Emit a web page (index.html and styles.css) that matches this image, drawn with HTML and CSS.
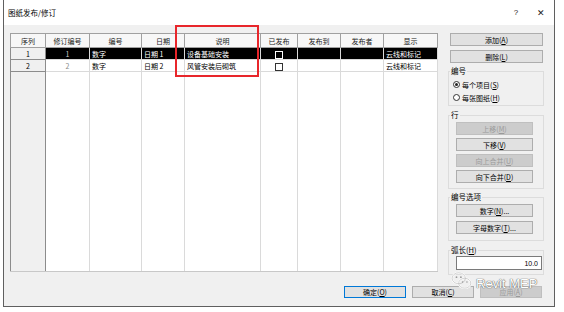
FILE: index.html
```html
<!DOCTYPE html>
<html lang="zh-CN">
<head>
    <meta charset="UTF-8">
    <title>图纸发布/修订</title>
    <link rel="stylesheet" href="styles.css">
</head>
<body>
    <div class="dialog">
        <div class="titlebar">
            <span class="title">图纸发布/修订</span>
            <span class="help">?</span>
            <span class="close">✕</span>
        </div>

        <div class="content">
            <div class="main">
                <!-- revision grid -->
                <table class="grid">
                    <colgroup>
                        <col style="width:35px">
                        <col style="width:44px">
                        <col style="width:52px">
                        <col style="width:43px">
                        <col style="width:76px">
                        <col style="width:37px">
                        <col style="width:43px">
                        <col style="width:43px">
                        <col style="width:54px">
                    </colgroup>
                    <tr class="head">
                        <th>序列</th>
                        <th>修订编号</th>
                        <th>编号</th>
                        <th>日期</th>
                        <th>说明</th>
                        <th>已发布</th>
                        <th>发布到</th>
                        <th>发布者</th>
                        <th>显示</th>
                    </tr>
                    <tr class="row selected">
                        <td class="rowhead">1</td>
                        <td class="num">1</td>
                        <td>数字</td>
                        <td>日期 1</td>
                        <td>设备基础安装</td>
                        <td class="check"><span class="box"></span></td>
                        <td></td>
                        <td></td>
                        <td>云线和标记</td>
                    </tr>
                    <tr class="row">
                        <td class="rowhead">2</td>
                        <td class="num">2</td>
                        <td>数字</td>
                        <td>日期 2</td>
                        <td>风管安装后砌筑</td>
                        <td class="check"><span class="box"></span></td>
                        <td></td>
                        <td></td>
                        <td>云线和标记</td>
                    </tr>
                    <tr class="filler">
                        <td class="rowhead"></td>
                        <td></td><td></td><td></td><td></td>
                        <td></td><td></td><td></td><td></td>
                    </tr>
                </table>

                <!-- side controls -->
                <div class="side">
                    <button class="btn wide">添加(<u>A</u>)</button>
                    <button class="btn wide">删除(<u>L</u>)</button>

                    <fieldset class="group">
                        <legend>编号</legend>
                        <div class="radio on"><i></i>每个项目(<u>S</u>)</div>
                        <div class="radio"><i></i>每张图纸(<u>H</u>)</div>
                    </fieldset>

                    <fieldset class="group rows">
                        <legend>行</legend>
                        <button class="btn inner" disabled>上移(<u>M</u>)</button>
                        <button class="btn inner">下移(<u>V</u>)</button>
                        <button class="btn inner" disabled>向上合并(<u>U</u>)</button>
                        <button class="btn inner">向下合并(<u>D</u>)</button>
                    </fieldset>

                    <fieldset class="group opts">
                        <legend>编号选项</legend>
                        <button class="btn inner">数字(<u>N</u>)...</button>
                        <button class="btn inner">字母数字(<u>T</u>)...</button>
                    </fieldset>

                    <fieldset class="group arc">
                        <legend>弧长(<u>H</u>)</legend>
                        <input class="field" type="text" value="10.0">
                    </fieldset>
                </div>
            </div>

            <div class="footer">
                <button class="btn foot default">确定(<u>O</u>)</button>
                <button class="btn foot">取消(<u>C</u>)</button>
                <button class="btn foot" disabled>应用(<u>A</u>)</button>
            </div>
        </div>

        <!-- red highlight drawn over the grid -->
        <div class="highlight"></div>

        <!-- watermark -->
        <div class="watermark">
            <svg width="22" height="20" viewBox="0 0 20 18">
                <ellipse cx="7" cy="6.5" rx="6" ry="5" fill="none" stroke="#fff" stroke-width="1.6"/>
                <ellipse cx="12.5" cy="11" rx="5.5" ry="4.5" fill="#f0f0f0" stroke="#fff" stroke-width="1.6"/>
                <ellipse cx="7" cy="6.5" rx="6" ry="5" fill="none" stroke="#9a9a9a" stroke-width="0.4"/>
                <ellipse cx="12.5" cy="11" rx="5.5" ry="4.5" fill="none" stroke="#9a9a9a" stroke-width="0.4"/>
                <circle cx="5" cy="5.5" r="0.8" fill="#999"/>
                <circle cx="9" cy="5.5" r="0.8" fill="#999"/>
                <circle cx="10.5" cy="10" r="0.7" fill="#999"/>
                <circle cx="14.5" cy="10" r="0.7" fill="#999"/>
            </svg>
            <span>Revit MEP</span>
        </div>

        <div class="grip"></div>
    </div>
</body>
</html>
```

FILE: styles.css
```css
* {
    margin: 0;
    padding: 0;
    box-sizing: border-box;
}

body {
    background: #fff;
    font-family: "Noto Sans CJK SC", "Noto Sans", sans-serif;
    font-size: 7px;
    color: #000;
}

.dialog {
    position: relative;
    margin-left: 3px;
    width: 552px;
    height: 307px;
    border: 1px solid #5f5f5f;
    border-top: none;
    background: #f0f0f0;
}

/* Title bar */
.titlebar {
    height: 25px;
    background: #fff;
    display: flex;
    align-items: center;
    padding-left: 4px;
}

.title {
    flex: 1;
    font-size: 7.5px;
}

.help,
.close {
    text-align: center;
    font-family: "Liberation Sans", sans-serif;
    font-size: 8px;
    color: #222;
}

.help {
    width: 24px;
}

.close {
    width: 26px;
    font-size: 9px;
}

.content {
    padding: 8px 0 0 6px;
}

.main {
    display: flex;
    align-items: flex-start;
    height: 253px;
}

/* Grid */
.grid {
    width: 427px;
    height: 239px;
    table-layout: fixed;
    border-collapse: collapse;
    border: 1px solid #8a8a8a;
    background: #fff;
}

.grid th,
.grid td {
    padding: 0 2px;
    white-space: nowrap;
    overflow: hidden;
    font-weight: normal;
    line-height: 10px;
}

.grid th {
    height: 14px;
    background: #f7f7f7;
    border: 1px solid #a0a0a0;
    text-align: center;
    color: #222;
}

.grid td {
    height: 12px;
    border-left: 1px solid #dadada;
    border-right: 1px solid #dadada;
    border-bottom: 1px solid #dadada;
}

.grid .rowhead {
    background: #f0f0f0;
    border: 1px solid #8c8c8c;
    text-align: center;
    color: #000;
}

.grid .num {
    text-align: center;
    color: #8a8a8a;
}

.grid .filler td {
    height: auto;
    border-bottom: 1px solid #c8c8c8;
}

.grid .selected td {
    background: #000;
    color: #fff;
}

.grid .selected .num {
    color: #c8c8c8;
}

.grid .selected .rowhead {
    background: #f0f0f0;
    color: #000;
}

.check {
    text-align: center;
}

.box {
    display: inline-block;
    width: 8px;
    height: 8px;
    border: 1px solid #333;
    background: #fff;
    vertical-align: middle;
}

.selected .box {
    border-color: #fff;
    background: #000;
}

/* Buttons */
.btn {
    display: block;
    height: 13px;
    background: #e1e1e1;
    border: 1px solid #adadad;
    font-family: "Noto Sans CJK SC", "Noto Sans", sans-serif;
    font-size: 7px;
    line-height: 10px;
    color: #000;
    text-align: center;
}

.btn:disabled {
    background: #cccccc;
    border-color: #bfbfbf;
    color: #9a9a9a;
}

.btn u {
    text-underline-offset: 1px;
}

.side {
    width: 96px;
    margin-left: 10px;
}

.btn.wide {
    width: 93px;
    margin-left: 2px;
    margin-bottom: 4px;
}

/* Group boxes */
.group {
    border: 1px solid #dcdcdc;
    margin-top: 5px;
    padding: 0;
}

.group legend {
    font-size: 7.5px;
    line-height: 8px;
    margin-left: 1px;
    padding: 0 1px;
    color: #000;
}

.side .group:first-of-type {
    margin-top: 2px;
    padding: 3px 0 1px;
}

.radio {
    display: flex;
    align-items: center;
    height: 13px;
    padding-left: 4px;
}

.radio i {
    position: relative;
    width: 7px;
    height: 7px;
    border: 1px solid #333;
    border-radius: 50%;
    background: #fff;
    margin-right: 2px;
}

.radio.on i::after {
    content: "";
    position: absolute;
    left: 1px;
    top: 1px;
    width: 3px;
    height: 3px;
    border-radius: 50%;
    background: #222;
}

.btn.inner {
    width: 77px;
    margin-left: 7px;
    margin-bottom: 3px;
}

.rows {
    padding: 3px 0 2px;
}

.opts {
    padding: 3px 0 2px;
    margin-top: 4px;
}

.opts .btn.inner {
    margin-bottom: 4px;
}

.arc {
    padding: 2px 0 4px;
    margin-top: 5px;
}

.field {
    display: block;
    width: 86px;
    height: 14px;
    margin-left: 7px;
    border: 1px solid #7a7a7a;
    background: #fff;
    text-align: right;
    padding-right: 3px;
    font-family: "Liberation Sans", sans-serif;
    font-size: 7px;
}

/* Footer */
.footer {
    display: flex;
    justify-content: flex-end;
    gap: 6px;
    padding-right: 12px;
}

.btn.foot {
    width: 62px;
    height: 12px;
    line-height: 9px;
}

.btn.default {
    border-color: #0078d7;
}

/* Overlays */
.highlight {
    position: absolute;
    left: 171px;
    top: 25px;
    width: 84px;
    height: 52px;
    border: 2px solid #e8262b;
}

.watermark {
    position: absolute;
    left: 447px;
    top: 271px;
    display: flex;
    align-items: center;
    gap: 3px;
}

.watermark span {
    font-family: "Liberation Sans", sans-serif;
    font-size: 13px;
    color: #fff;
    text-shadow: 0 0 1px #555, 0 0 1px #555;
    margin-top: 4px;
}

.grip {
    position: absolute;
    right: 1px;
    bottom: 1px;
    width: 5px;
    height: 5px;
    background: radial-gradient(circle, #a0a0a0 0.6px, transparent 0.7px) 0 0 / 2px 2px;
}
```
